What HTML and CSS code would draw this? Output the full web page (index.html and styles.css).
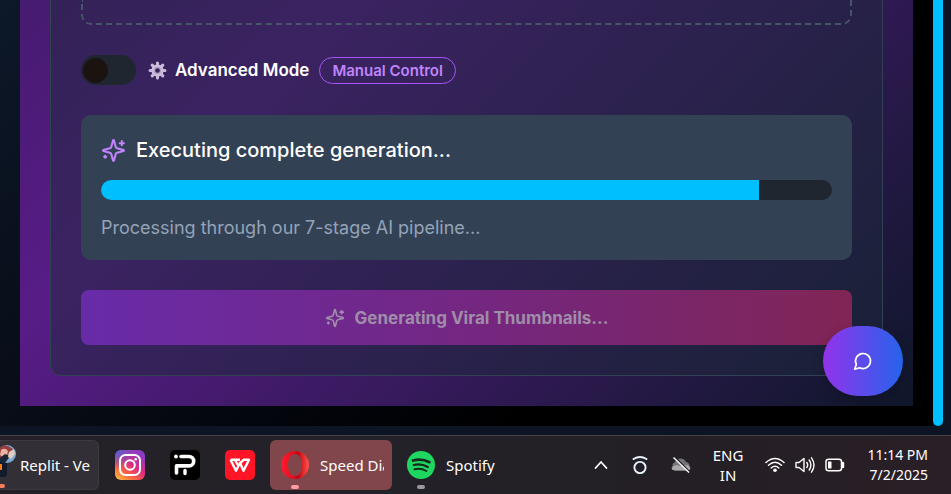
FILE: index.html
```html
<!DOCTYPE html>
<html lang="en">
<head>
<meta charset="utf-8">
<title>Thumbnail Generator</title>
<link rel="stylesheet" href="styles.css">
</head>
<body>
<svg class="defs" aria-hidden="true">
  <symbol id="sparkles" viewBox="0 0 24 24" fill="none" stroke="currentColor" stroke-width="2" stroke-linecap="round" stroke-linejoin="round">
    <path d="M9.937 15.5A2 2 0 0 0 8.5 14.063l-6.135-1.582a.5.5 0 0 1 0-.962L8.5 9.936A2 2 0 0 0 9.937 8.5l1.582-6.135a.5.5 0 0 1 .963 0L14.063 8.5A2 2 0 0 0 15.5 9.937l6.135 1.581a.5.5 0 0 1 0 .964L15.5 14.063a2 2 0 0 0-1.437 1.437l-1.582 6.135a.5.5 0 0 1-.963 0z"/>
    <path d="M20 3v4M22 5h-4M4 17v2M5 18H3"/>
  </symbol>
</svg>
<div class="app">
  <main class="stage">
    <div class="page">
      <section class="card">
        <div class="dropzone"></div>
        <div class="mode">
          <input class="switch" type="checkbox" id="advanced">
          <label class="mode-label" for="advanced">
            <svg class="gear" viewBox="0 0 18 18" aria-hidden="true">
              <g stroke="#c9b8dc" stroke-width="3" stroke-linecap="round">
                <path d="M9 2v14M2 9h14M4 4l10 10M14 4 4 14"/>
              </g>
              <circle cx="9" cy="9" r="5.800" fill="#cdbfdd"/>
              <circle cx="9" cy="9" r="3.600" fill="#b3a2c4"/>
              <circle cx="9" cy="9" r="2.200" fill="#3a2260"/>
            </svg>
            Advanced Mode
          </label>
          <span class="badge">Manual Control</span>
        </div>
        <div class="status">
          <h2 class="status-title"><svg class="status-icon" aria-hidden="true"><use href="#sparkles"/></svg>Executing complete generation...</h2>
          <div class="progress" role="progressbar" aria-valuenow="90" aria-valuemin="0" aria-valuemax="100"><div class="progress-fill" style="width:90%"></div></div>
          <p class="status-note">Processing through our 7-stage AI pipeline...</p>
        </div>
        <button class="generate" type="button" disabled><svg class="generate-icon" aria-hidden="true"><use href="#sparkles"/></svg>Generating Viral Thumbnails...</button>
      </section>
      <button class="chat" type="button" aria-label="Chat">
        <svg class="chat-icon" viewBox="0 0 24 24" fill="none" stroke="currentColor" stroke-width="2" stroke-linecap="round" stroke-linejoin="round"><path d="M7.9 20A9 9 0 1 0 4 16.1L2 22Z"/></svg>
      </button>
    </div>
  </main>
  <div class="scrollbar"></div>
</div>
<footer class="taskbar">
  <button class="task task-replit" type="button">
    <svg class="replit-icon" viewBox="0 0 19 46" aria-hidden="true">
      <path d="M0 12h4a3 3 0 0 1 3 3v17a3 3 0 0 1-3 3H0z" fill="#111b2b"/>
      <path d="M0 22h2v6H0z" fill="#f57a18"/>
      <circle cx="7" cy="12" r="9" fill="#78a9cf"/>
      <path d="M-1 7Q2 2 8 4l5 3-1 4-4 1-1 4-7 3z" fill="#963d42"/>
      <path d="M1 8q4-3 7 1l-1 4-4 2-3-2z" fill="#e8b59c"/>
      <path d="M0 16l5-4 5 2-2 3-3 4-5-1z" fill="#182637"/>
      <path d="M9 10l5-3 1 5-4 5-3-2z" fill="#e4cbbc"/>
      <rect x="-5" y="42" width="10" height="4" rx="2" fill="#f77d5d"/>
    </svg>
    <span>Replit - Ve</span>
  </button>
  <button class="tile" type="button" aria-label="Instagram">
    <svg viewBox="0 0 30 30">
      <defs>
        <linearGradient id="ig" x1="0" y1="1" x2=".7" y2="0"><stop offset="0" stop-color="#ffc84a"/><stop offset=".3" stop-color="#fa6b3d"/><stop offset=".6" stop-color="#dd2c83"/><stop offset="1" stop-color="#8a3cc6"/></linearGradient>
        <radialGradient id="igb" cx="0" cy="0" r=".65"><stop offset="0" stop-color="#4267dc"/><stop offset="1" stop-color="#4267dc" stop-opacity="0"/></radialGradient>
      </defs>
      <rect width="30" height="30" rx="6" fill="url(#ig)"/><rect width="30" height="30" rx="6" fill="url(#igb)"/>
      <rect x="5" y="5" width="20" height="20" rx="5.5" fill="none" stroke="#fff" stroke-width="2"/>
      <circle cx="15" cy="15" r="4.8" fill="none" stroke="#fff" stroke-width="2"/><circle cx="20.7" cy="9.2" r="1.3" fill="#fff"/>
    </svg>
  </button>
  <button class="tile" type="button" aria-label="iP">
    <svg viewBox="0 0 30 30">
      <rect width="30" height="30" rx="5" fill="#000"/>
      <circle cx="6" cy="6.500" r="1.900" fill="#fff"/>
      <path d="M11 6.500h8a4.700 4.700 0 0 1 0 9.400H6.500v7" fill="none" stroke="#fff" stroke-width="3.600" stroke-linecap="round" stroke-linejoin="round"/>
      <path d="M15 20.500v3" stroke="#fff" stroke-width="3.400" stroke-linecap="round"/>
    </svg>
  </button>
  <button class="tile" type="button" aria-label="WPS Office">
    <svg viewBox="0 0 30 30">
      <rect width="30" height="30" rx="5" fill="#ff1525"/>
      <g fill="none" stroke="#fff" stroke-width="2.400" stroke-linejoin="round"><path d="M5.500 9.800H15M5.500 9.800l5.500 11 4-8 3.500 8 5.500-11h-5.500l-3 3"/><path d="m10 10 3.500 6"/></g>
    </svg>
  </button>
  <button class="task task-opera" type="button">
    <svg class="app-icon" viewBox="0 0 28 28" aria-hidden="true">
      <defs><linearGradient id="op" x1="0" x2="1"><stop offset="0" stop-color="#ff1b2d"/><stop offset=".45" stop-color="#df1020"/><stop offset=".6" stop-color="#c50010"/><stop offset="1" stop-color="#ff5548"/></linearGradient></defs>
      <path fill="url(#op)" fill-rule="evenodd" d="M14 0a14 14 0 1 0 0 28 14 14 0 0 0 0-28zm0 3c4.500 0 7 5 7 11s-2.500 11-7 11-7-5-7-11 2.500-11 7-11z"/>
    </svg>
    <span class="clip">Speed Dial</span>
    <i class="dot dot-active"></i>
  </button>
  <button class="task task-spotify" type="button">
    <svg class="app-icon" viewBox="0 0 28 28" aria-hidden="true">
      <circle cx="14" cy="14" r="14" fill="#1ed760"/>
      <g fill="none" stroke="#17291d" stroke-linecap="round"><path d="M6 9.500Q14.500 7 22.500 11.200" stroke-width="2.700"/><path d="M6.800 14q7.500-2 14 2" stroke-width="2.300"/><path d="M7.400 18.200q6.500-1.500 12 1.800" stroke-width="1.900"/></g>
    </svg>
    <span>Spotify</span>
    <i class="dot"></i>
  </button>
  <div class="tray">
    <svg class="tray-chevron" viewBox="0 0 14 20" aria-label="Show hidden icons"><path d="m1.500 13 5.500-6 5.500 6" fill="none" stroke="#fff" stroke-width="1.800" stroke-linecap="round" stroke-linejoin="round"/></svg>
    <svg class="tray-ring" viewBox="0 0 16 20" aria-hidden="true"><g fill="none" stroke="#e8f3ff" stroke-width="1.900" stroke-linecap="round"><circle cx="8" cy="12.500" r="5.600"/><path d="M1.500 4Q8 0 14.500 4"/></g></svg>
    <svg class="tray-cloud" viewBox="0 0 20 20" aria-hidden="true"><path d="M5 15.500a4.500 4.500 0 0 1-1-8.500 6 6 0 0 1 11 0 4.500 4.500 0 0 1 1 8.500z" fill="#747276"/><path d="M.5 13q3.500-5 8.500-2l8-1 2.500 3q-.5 2.500-3.500 2.500H4q-3 0-3.500-2.500z" fill="#a9a8ab"/><path d="m3.500 2 15 15" stroke="#252126" stroke-width="2"/><path d="m2.500 2.500 15.500 15" stroke="#fff" stroke-width="1.400"/></svg>
    <div class="lang">ENG<br>IN</div>
    <svg class="tray-icon" viewBox="0 0 20 20" aria-label="Wi-Fi"><g fill="none" stroke="#fff" stroke-width="1.500" stroke-linecap="round"><path d="M1 7.500q9-8 18 0M3.500 10.200q6.500-5.800 13 0M6.200 13q3.800-3.400 7.600 0"/></g><circle cx="10" cy="15.200" r="1.800" fill="#fff"/></svg>
    <svg class="tray-icon" viewBox="0 0 20 20" aria-label="Volume"><g fill="none" stroke="#fff" stroke-width="1.400" stroke-linecap="round" stroke-linejoin="round"><path d="M1 7.500h3l5-4v13l-5-4H1zM11.800 7.500q1.800 2.500 0 5M14.200 5q3.400 5 0 10M16.500 2.800q5 7.200 0 14.400"/></g></svg>
    <svg class="tray-icon" viewBox="0 0 20 20" aria-label="Battery"><rect x="1" y="4.200" width="15.500" height="11.600" rx="2.500" fill="none" stroke="#fff" stroke-width="1.500"/><rect x="3" y="6.500" width="3.500" height="7" rx=".5" fill="#fff"/><path d="M18 8v4" stroke="#fff" stroke-width="2.400" stroke-linecap="round"/></svg>
    <div class="clock">11:14 PM<br>7/2/2025</div>
  </div>
</footer>
</body>
</html>
```
FILE: styles.css
```css
* {
  box-sizing: border-box;
}

body {
  margin: 0;
  display: flex;
  flex-direction: column;
  min-height: 100vh;
  overflow: hidden;
  background: #0d1524;
  font-family: Inter, sans-serif;
  color: #fff;
}

button {
  border: 0;
  padding: 0;
  color: inherit;
  font: inherit;
}

.defs {
  display: none;
}

.app {
  display: flex;
  padding-right: 8px;
}

.stage {
  flex: 1;
  padding: 0 20px 20px;
  background: linear-gradient(135deg, #0d1829 0%, #080d17 30%, #02040a 55%, #000 70%);
}

.page {
  position: relative;
  padding: 0 30px 30px;
  background: linear-gradient(135deg, #461b70 0%, #581c87 25%, #0f172a 100%);
}

.scrollbar {
  width: 10px;
  background: #00bfff;
  border-radius: 0 0 5px 5px;
}

.card {
  padding: 0 30px 30px;
  border: 1px solid #334155;
  border-top: 0;
  border-radius: 0 0 10px 10px;
  background: rgba(30, 41, 59, 0.5);
}

.dropzone {
  height: 25px;
  border: 2px dashed #475569;
  border-top: 0;
  border-radius: 0 0 10px 10px;
}

.mode {
  display: flex;
  align-items: center;
  margin: 30px 0;
}

.switch {
  appearance: none;
  display: flex;
  align-items: center;
  width: 55px;
  height: 30px;
  margin: 0 12px 0 0;
  padding: 0 2px;
  border-radius: 15px;
  background: #20262f;
}

.switch::before {
  content: "";
  width: 25px;
  height: 25px;
  border-radius: 50%;
  background: #1a1310;
}

.switch:checked::before {
  margin-left: auto;
}

.mode-label {
  display: flex;
  align-items: center;
  gap: 8px;
  font-size: 17px;
  font-weight: 600;
  line-height: 25px;
}

.gear {
  width: 19px;
  height: 19px;
}

.badge {
  margin-left: 10px;
  padding: 0 12px;
  border: 1px solid #a855f7;
  border-radius: 14px;
  color: #c084fc;
  font-size: 15px;
  font-weight: 600;
  line-height: 25px;
}

.status {
  padding: 20px;
  border-radius: 10px;
  background: #334155;
}

.status-title {
  display: flex;
  align-items: center;
  gap: 10px;
  margin: 0 0 15px;
  font-size: 20px;
  font-weight: 500;
  line-height: 30px;
}

.status-icon {
  width: 25px;
  height: 25px;
  color: #c084fc;
}

.progress {
  height: 20px;
  border-radius: 10px;
  overflow: hidden;
  background: #20262f;
}

.progress-fill {
  height: 100%;
  background: #00bfff;
}

.status-note {
  margin: 15px 0 0;
  color: #94a3b8;
  font-size: 18px;
  line-height: 25px;
}

.generate {
  display: flex;
  align-items: center;
  justify-content: center;
  gap: 10px;
  width: 100%;
  height: 55px;
  margin-top: 30px;
  border-radius: 8px;
  background: linear-gradient(90deg, #682ba8, #742782 50%, #802555);
  color: #9f8da9;
  font-size: 17px;
  font-weight: 700;
}

.generate-icon {
  width: 20px;
  height: 20px;
}

.chat {
  position: absolute;
  right: 10px;
  bottom: 10px;
  display: grid;
  place-items: center;
  width: 80px;
  height: 70px;
  border-radius: 35px;
  background: linear-gradient(90deg, #9333ea, #2563eb);
  box-shadow: 0 4px 12px rgba(0, 0, 0, 0.2);
}

.chat-icon {
  width: 20px;
  height: 20px;
}

.taskbar {
  display: flex;
  align-items: center;
  height: 59px;
  margin-top: 9px;
  border-top: 1px solid #45424b;
  background: linear-gradient(90deg, #252027, #232228 40%, #231f25 70%, #2a1f26);
  font-family: "Noto Sans", sans-serif;
  font-size: 15px;
}

.task {
  position: relative;
  display: flex;
  align-items: center;
  height: 50px;
  border-radius: 6px;
  background: none;
  white-space: nowrap;
}

.task-replit {
  width: 99px;
  gap: 1px;
  border: 1px solid #3d3941;
  border-left: 0;
  border-radius: 0 6px 6px 0;
  background: #332f37;
}

.replit-icon {
  width: 19px;
  height: 46px;
}

.tile {
  width: 30px;
  height: 30px;
  margin-left: 16px;
  background: none;
}

.tile + .tile {
  margin-left: 25px;
}

.tile svg {
  display: block;
}

.app-icon {
  flex: none;
  width: 28px;
  height: 28px;
}

.task-opera {
  width: 122px;
  gap: 11px;
  margin-left: 15px;
  padding: 0 8px 0 11px;
  background: #81464b;
}

.clip {
  overflow: hidden;
}

.task-spotify {
  gap: 11px;
  margin-left: 15px;
}

.dot {
  position: absolute;
  left: 10px;
  bottom: 1px;
  width: 8px;
  height: 4px;
  border-radius: 2px;
  background: #9b999d;
}

.dot-active {
  left: 21px;
  background: #ff9aa5;
}

.tray {
  display: flex;
  align-items: center;
  gap: 10px;
  margin-left: auto;
  padding-right: 23px;
  line-height: 20px;
}

.tray-chevron {
  width: 14px;
  height: 20px;
  margin-right: 14px;
}

.tray-ring {
  width: 16px;
  height: 20px;
  margin-right: 13px;
}

.tray-cloud,
.tray-icon {
  width: 20px;
  height: 20px;
}

.lang {
  margin: 0 12px;
  text-align: center;
}

.clock {
  margin-left: 12px;
  font-size: 14px;
  text-align: right;
}
```
